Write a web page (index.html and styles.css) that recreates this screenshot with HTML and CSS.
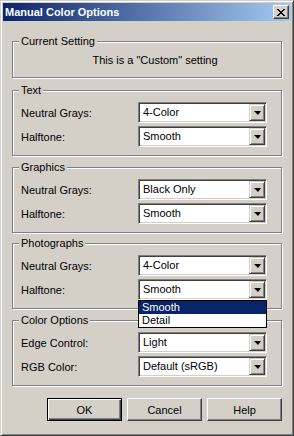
FILE: index.html
```html
<!DOCTYPE html>
<html lang="en">
<head>
<meta charset="UTF-8">
<meta name="viewport" content="width=device-width, initial-scale=1.0">
<title>Manual Color Options</title>
<link rel="stylesheet" href="styles.css">
</head>
<body>

<div class="window">
    <div class="titlebar">
        <span class="title">Manual Color Options</span>
        <button class="close-btn" type="button">
            <svg width="8" height="7" viewBox="0 0 8 7" shape-rendering="crispEdges">
                <path d="M0 0h2v1H0zM6 0h2v1H6zM1 1h2v1H1zM5 1h2v1H5zM2 2h4v1H2zM3 3h2v1H3zM2 4h4v1H2zM1 5h2v1H1zM5 5h2v1H5zM0 6h2v1H0zM6 6h2v1H6z" fill="#000"/>
            </svg>
        </button>
    </div>

    <div class="content">
        <fieldset class="group group-current">
            <legend>Current Setting</legend>
            <p class="current-text">This is a "Custom" setting</p>
        </fieldset>

        <fieldset class="group group-text">
            <legend>Text</legend>
            <div class="row">
                <label>Neutral Grays:</label>
                <div class="combo"><span class="combo-value">4-Color</span><span class="combo-btn"><span class="arrow"></span></span></div>
            </div>
            <div class="row">
                <label>Halftone:</label>
                <div class="combo"><span class="combo-value">Smooth</span><span class="combo-btn"><span class="arrow"></span></span></div>
            </div>
        </fieldset>

        <fieldset class="group group-graphics">
            <legend>Graphics</legend>
            <div class="row">
                <label>Neutral Grays:</label>
                <div class="combo"><span class="combo-value">Black Only</span><span class="combo-btn"><span class="arrow"></span></span></div>
            </div>
            <div class="row">
                <label>Halftone:</label>
                <div class="combo"><span class="combo-value">Smooth</span><span class="combo-btn"><span class="arrow"></span></span></div>
            </div>
        </fieldset>

        <fieldset class="group">
            <legend>Photographs</legend>
            <div class="row">
                <label>Neutral Grays:</label>
                <div class="combo"><span class="combo-value">4-Color</span><span class="combo-btn"><span class="arrow"></span></span></div>
            </div>
            <div class="row">
                <label>Halftone:</label>
                <div class="combo open">
                    <span class="combo-value">Smooth</span><span class="combo-btn"><span class="arrow"></span></span>
                    <ul class="dropdown">
                        <li class="selected">Smooth</li>
                        <li>Detail</li>
                    </ul>
                </div>
            </div>
        </fieldset>

        <fieldset class="group group-color">
            <legend>Color Options</legend>
            <div class="row">
                <label>Edge Control:</label>
                <div class="combo"><span class="combo-value">Light</span><span class="combo-btn"><span class="arrow"></span></span></div>
            </div>
            <div class="row">
                <label>RGB Color:</label>
                <div class="combo"><span class="combo-value">Default (sRGB)</span><span class="combo-btn"><span class="arrow"></span></span></div>
            </div>
        </fieldset>

        <div class="buttons">
            <button class="push-btn default" type="button">OK</button>
            <button class="push-btn" type="button">Cancel</button>
            <button class="push-btn" type="button">Help</button>
        </div>
    </div>
</div>

</body>
</html>
```

FILE: styles.css
```css
html, body {
    margin: 0;
    padding: 0;
}
body {
    font-family: "Liberation Sans", Arial, sans-serif;
    font-size: 11px;
    color: #000;
    background-color: #d4d0c8;
}
.window {
    width: 294px;
    height: 436px;
    box-sizing: border-box;
    padding: 2px;
    background-color: #d4d0c8;
    border: 1px solid;
    border-color: #d4d0c8 #404040 #404040 #d4d0c8;
    box-shadow: inset 1px 1px 0 #fff, inset -1px -1px 0 #808080;
}
.titlebar {
    height: 18px;
    display: flex;
    align-items: center;
    justify-content: space-between;
    padding: 0 2px 0 2px;
    background: linear-gradient(to right, #0a246a, #a6caf0);
}
.title {
    color: #fff;
    font-weight: bold;
    font-size: 11px;
    line-height: 13px;
}
.close-btn {
    width: 16px;
    height: 14px;
    padding: 0;
    display: flex;
    align-items: center;
    justify-content: center;
    background-color: #d4d0c8;
    border: 1px solid;
    border-color: #fff #404040 #404040 #fff;
    box-shadow: inset -1px -1px 0 #808080;
}
.content {
    padding: 0 9px;
}
.group {
    margin: 4px 0 0 0;
    padding: 0 8px 8px 8px;
    border: 1px solid #808080;
    box-shadow: 1px 1px 0 #fff, inset 1px 1px 0 #fff;
    min-width: 0;
}
.group legend {
    margin-left: -2px;
    padding: 0 2px;
    height: 13px;
    line-height: 13px;
    background-color: #d4d0c8;
}
.group-current {
    margin-top: 14px;
    padding-bottom: 10px;
}
.group-text {
    margin-top: 6px;
}
.group-graphics {
    margin-top: 5px;
}
.group-color {
    margin-top: 5px;
}
.current-text {
    margin: 6px 0 0 0;
    padding-left: 16px;
    line-height: 13px;
    text-align: center;
}
.row {
    display: flex;
    align-items: center;
    margin-top: 3px;
}
.row:first-of-type {
    margin-top: 5px;
}
.row label {
    width: 117px;
    flex-shrink: 0;
}
.combo {
    position: relative;
    width: 129px;
    height: 21px;
    box-sizing: border-box;
    display: flex;
    align-items: center;
    background-color: #fff;
    border: 1px solid;
    border-color: #808080 #fff #fff #808080;
    box-shadow: inset 1px 1px 0 #404040, inset -1px -1px 0 #d4d0c8;
    padding: 1px;
}
.combo-value {
    flex: 1;
    padding-left: 3px;
    line-height: 13px;
}
.combo-btn {
    width: 16px;
    height: 17px;
    box-sizing: border-box;
    display: flex;
    align-items: center;
    justify-content: center;
    background-color: #d4d0c8;
    border: 1px solid;
    border-color: #d4d0c8 #404040 #404040 #d4d0c8;
    box-shadow: inset 1px 1px 0 #fff, inset -1px -1px 0 #808080;
}
.arrow {
    width: 0;
    height: 0;
    border-left: 4px solid transparent;
    border-right: 3px solid transparent;
    border-top: 4px solid #000;
    margin-top: 1px;
}
.dropdown {
    position: absolute;
    left: -1px;
    top: 20px;
    width: 129px;
    box-sizing: border-box;
    margin: 0;
    padding: 0;
    list-style: none;
    background-color: #fff;
    border: 1px solid #000;
    z-index: 2;
}
.dropdown li {
    height: 13px;
    line-height: 13px;
    padding-left: 3px;
}
.dropdown li.selected {
    background-color: #0a246a;
    color: #fff;
}
.buttons {
    display: flex;
    justify-content: flex-end;
    gap: 5px;
    margin-top: 12px;
}
.push-btn {
    width: 75px;
    height: 23px;
    padding: 0;
    font-family: inherit;
    font-size: 11px;
    color: #000;
    background-color: #d4d0c8;
    border: 1px solid;
    border-color: #fff #404040 #404040 #fff;
    box-shadow: inset -1px -1px 0 #808080;
}
.push-btn.default {
    border-color: #000;
    box-shadow: inset 1px 1px 0 #fff, inset -1px -1px 0 #404040, inset -2px -2px 0 #808080;
}
```
